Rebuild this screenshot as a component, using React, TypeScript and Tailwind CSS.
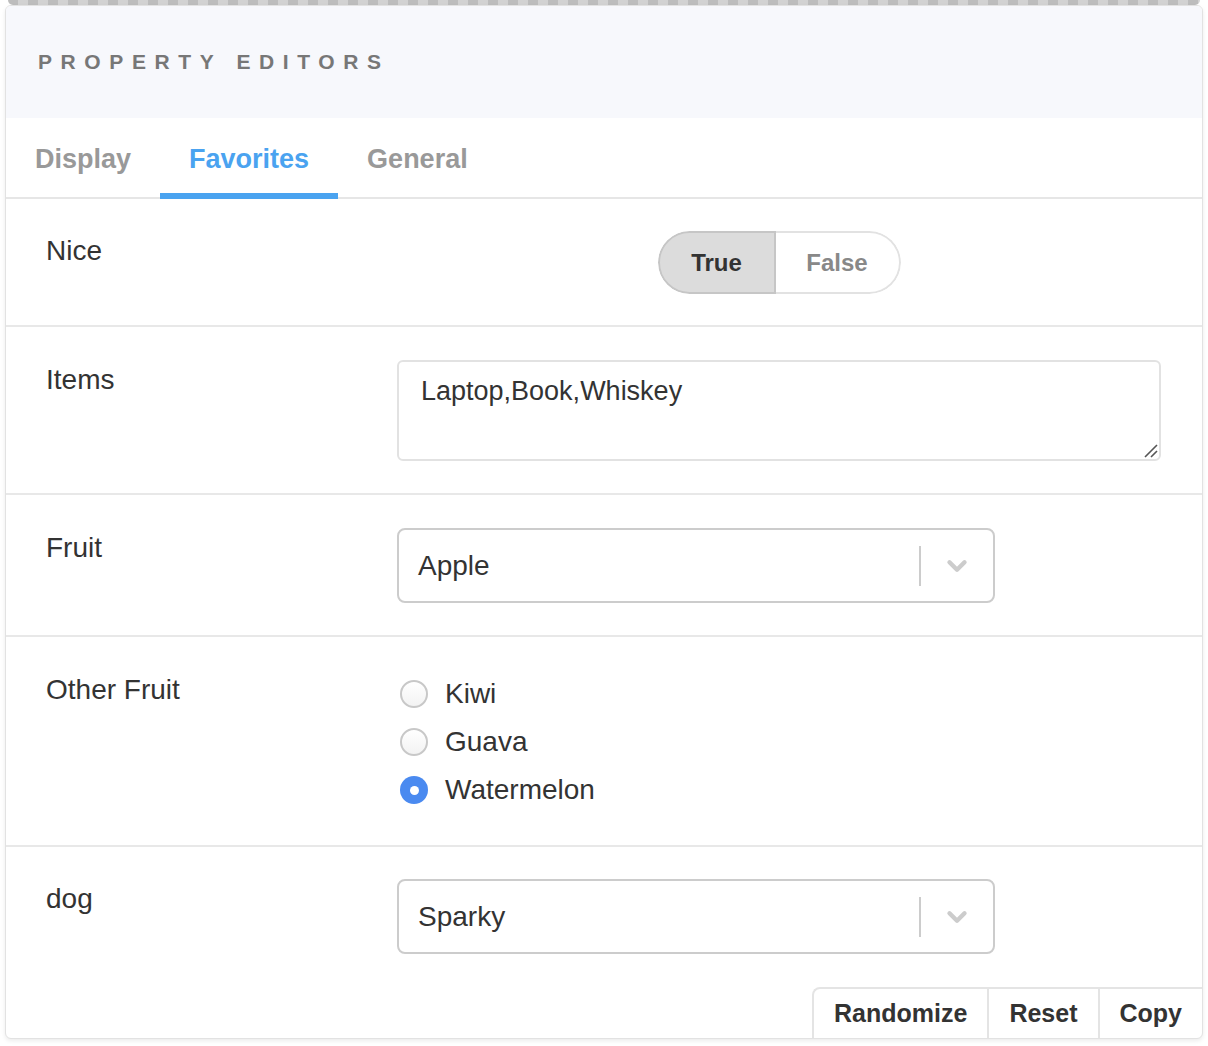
import { ChevronDown } from "lucide-react";

const font = "font-['Liberation_Sans',Arial,sans-serif]";

const tabs = ["Display", "Favorites", "General"];

const Row = ({
  label,
  pad = "pt-[33px] pb-[32px]",
  children,
}: {
  label: string;
  pad?: string;
  children: React.ReactNode;
}) => (
  <div className={`flex border-b-2 border-[#e8e8e8] pl-[40px] pr-[41px] ${pad}`}>
    <div className="w-[351px] shrink-0 text-[28px] leading-[40px] text-[#333]">{label}</div>
    <div className="flex-1">{children}</div>
  </div>
);

const Select = ({ value }: { value: string }) => (
  <div className="flex h-[75px] w-[598px] items-center rounded-[8px] border-2 border-[#cccccc] bg-white">
    <div className="flex-1 pl-[19px] text-[28px] text-[#333]">{value}</div>
    <div className="h-[40px] w-[2px] bg-[#cccccc]" />
    <div className="flex w-[72px] items-center justify-center">
      <ChevronDown className="h-[30px] w-[30px] text-[#cccccc]" strokeWidth={3.5} />
    </div>
  </div>
);

const Radio = ({ label, checked }: { label: string; checked?: boolean }) => (
  <div className="flex h-[48px] items-center">
    <div className="ml-[3px] mr-[17px] flex h-[28px] w-[28px] items-center justify-center">
      {checked ? (
        <div className="flex h-[28px] w-[28px] items-center justify-center rounded-full bg-[#4a8af0]">
          <div className="h-[9px] w-[9px] rounded-full bg-white" />
        </div>
      ) : (
        <div className="h-[28px] w-[28px] rounded-full border-2 border-[#c8c8c8] bg-gradient-to-b from-white to-[#f3f3f3]" />
      )}
    </div>
    <span className="text-[28px] text-[#333]">{label}</span>
  </div>
);

export default function App() {
  return (
    <div className={`${font} min-h-[1046px] bg-white`}>
      <div className="mx-[8px] h-[5px] rounded-b-[8px] bg-[repeating-linear-gradient(90deg,#bdbdbd_0px,#bdbdbd_10px,#d2d2d2_10px,#d2d2d2_20px)]" />
      <div className="mx-[5px] overflow-hidden rounded-[6px] border border-[#e2e2e2] bg-white shadow-[0_2px_4px_rgba(0,0,0,0.08)]">
        <div className="flex h-[112px] items-center bg-[#f7f8fc] pl-[32px]">
          <h2 className="text-[21px] font-bold tracking-[8.6px] text-[#777]">PROPERTY EDITORS</h2>
        </div>

        <div className="flex border-b-2 border-[#e6e6e6]">
          {tabs.map((t) => (
            <div
              key={t}
              className={`-mb-[2px] h-[81px] border-b-[6px] px-[29px] pt-[26px] text-[27px] font-bold leading-[30px] ${
                t === "Favorites" ? "border-[#4aa3f0] text-[#4aa3f0]" : "border-transparent text-[#999]"
              }`}
            >
              {t}
            </div>
          ))}
        </div>

        <Row label="Nice" pad="pt-[32px] pb-[31px]">
          <div className="flex justify-center">
            <div className="flex h-[63px] overflow-hidden rounded-full">
              <div className="flex w-[118px] items-center justify-center rounded-l-full border-2 border-[#c6c6c6] bg-[#dcdcdc] text-[24px] font-bold text-[#333]">
                True
              </div>
              <div className="flex w-[125px] items-center justify-center rounded-r-full border-2 border-l-0 border-[#e2e2e2] bg-white text-[24px] font-bold text-[#888]">
                False
              </div>
            </div>
          </div>
        </Row>

        <Row label="Items">
          <div className="relative h-[101px] rounded-[6px] border-2 border-[#e2e2e2] bg-white pl-[22px] pt-[11px] text-[27px] leading-[36px] text-[#333]">
            Laptop,Book,Whiskey
            <svg className="absolute bottom-[1px] right-[1px]" width="16" height="16" viewBox="0 0 16 16">
              <path d="M15 3 L3 15 M15 9 L9 15" stroke="#555" strokeWidth="1.6" />
            </svg>
          </div>
        </Row>

        <Row label="Fruit">
          <Select value="Apple" />
        </Row>

        <Row label="Other Fruit" pad="pt-[33px] pb-[31px]">
          <div>
            <Radio label="Kiwi" />
            <Radio label="Guava" />
            <Radio label="Watermelon" checked />
          </div>
        </Row>

        <div className="flex pt-[32px] pb-[33px] pl-[40px] pr-[41px]">
          <div className="w-[351px] shrink-0 text-[28px] leading-[40px] text-[#333]">dog</div>
          <div className="flex-1">
            <Select value="Sparky" />
          </div>
        </div>

        <div className="flex justify-end">
          <div className="flex h-[51px] overflow-hidden rounded-tl-[8px] border-l-2 border-t-2 border-[#e4e4e4]">
            {["Randomize", "Reset", "Copy"].map((b, i) => (
              <div
                key={b}
                className={`flex items-center px-[20px] text-[25px] font-bold text-[#333] ${i > 0 ? "border-l-2 border-[#e4e4e4]" : ""}`}
              >
                {b}
              </div>
            ))}
          </div>
        </div>
      </div>
    </div>
  );
}
